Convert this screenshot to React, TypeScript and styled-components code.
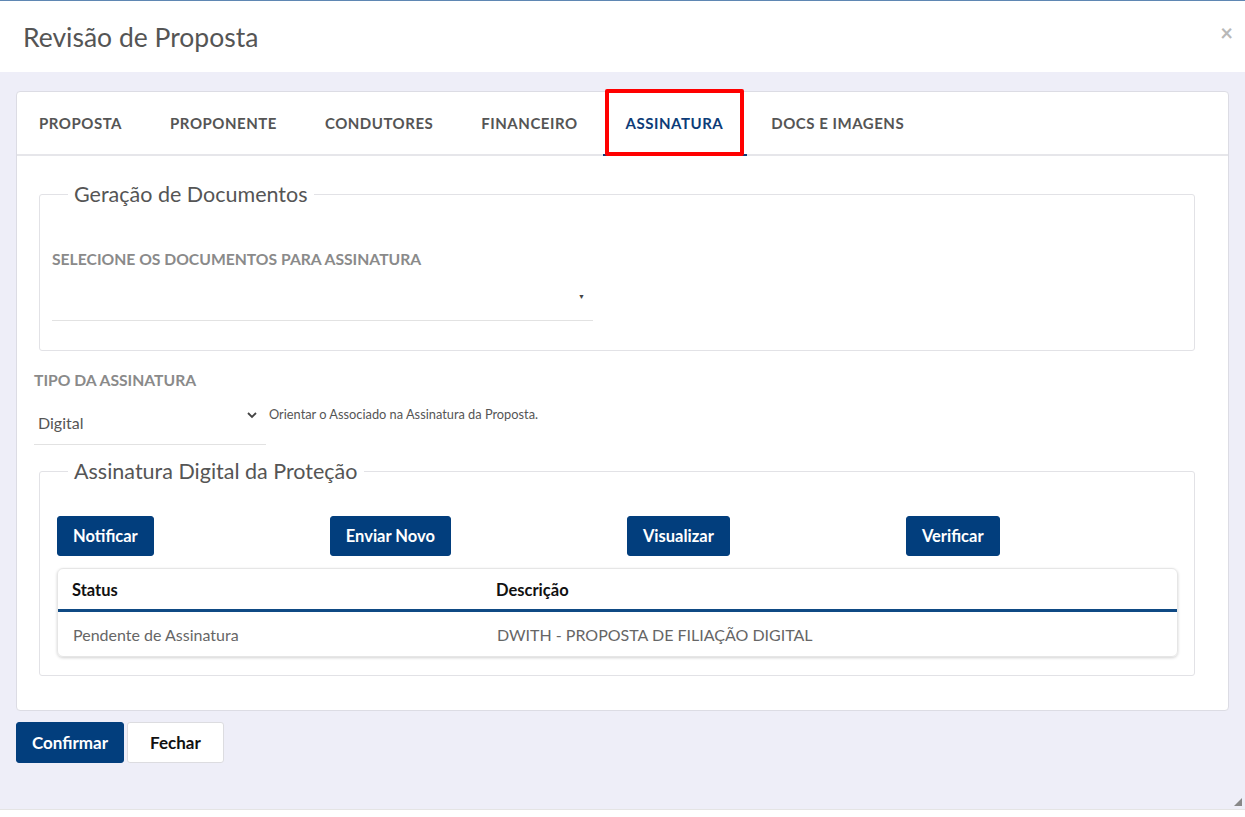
import styled, { createGlobalStyle } from 'styled-components';

const GlobalStyle = createGlobalStyle`
  html, body {
    margin: 0;
    padding: 0;
    background: #ffffff;
    font-family: Lato, "Liberation Sans", sans-serif;
  }
`;

const tabs = ['Proposta', 'Proponente', 'Condutores', 'Financeiro', 'Assinatura', 'Docs e Imagens'];
const actions = ['Notificar', 'Enviar Novo', 'Visualizar', 'Verificar'];

export default function App() {
  return (
    <>
      <GlobalStyle />
      <Modal>
        <Header>
          <Title>Revisão de Proposta</Title>
          <Close>×</Close>
        </Header>
        <Body>
          <Card>
            <TabBar>
              {tabs.map((t) => (
                <Tab key={t} $active={t === 'Assinatura'}>
                  {t}
                  {t === 'Assinatura' && <Highlight />}
                </Tab>
              ))}
            </TabBar>
            <CardContent>
              <Fieldset>
                <Legend>Geração de Documentos</Legend>
                <FieldBody $pad="43px 16px 29px 12px">
                  <FieldLabel>Selecione os documentos para assinatura</FieldLabel>
                  <DocSelect>
                    <SmallCaret>▼</SmallCaret>
                  </DocSelect>
                </FieldBody>
              </Fieldset>

              <TypeBlock>
                <FieldLabel>Tipo da assinatura</FieldLabel>
                <TypeRow>
                  <TypeSelect>
                    Digital
                    <Chevron viewBox="0 0 12 12">
                      <path d="M2 4l4 4 4-4" fill="none" stroke="#444" strokeWidth="1.8" />
                    </Chevron>
                  </TypeSelect>
                  <Hint>Orientar o Associado na Assinatura da Proposta.</Hint>
                </TypeRow>
              </TypeBlock>

              <Fieldset>
                <Legend>Assinatura Digital da Proteção</Legend>
                <FieldBody $pad="32px 16px 18px 17px">
                  <ActionRow>
                    {actions.map((a) => (
                      <PrimaryButton key={a}>{a}</PrimaryButton>
                    ))}
                  </ActionRow>
                  <TableCard>
                    <HeadRow>
                      <HeadCell>Status</HeadCell>
                      <HeadCell>Descrição</HeadCell>
                    </HeadRow>
                    <BodyRow>
                      <BodyCell>Pendente de Assinatura</BodyCell>
                      <BodyCell>DWITH - PROPOSTA DE FILIAÇÃO DIGITAL</BodyCell>
                    </BodyRow>
                  </TableCard>
                </FieldBody>
              </Fieldset>
            </CardContent>
          </Card>
          <Footer>
            <PrimaryButton $footer>Confirmar</PrimaryButton>
            <SecondaryButton>Fechar</SecondaryButton>
          </Footer>
          <Grip />
        </Body>
        <BottomStrip />
      </Modal>
    </>
  );
}

const Modal = styled.div`
  height: 100vh;
  display: flex;
  flex-direction: column;
  border-top: 1px solid #5f87b3;
  box-sizing: border-box;
`;

const Header = styled.div`
  height: 71px;
  display: flex;
  align-items: center;
  justify-content: space-between;
  padding: 0 12px 0 23px;
  background: #fff;
  flex-shrink: 0;
`;

const Title = styled.h2`
  margin: 0;
  font-size: 26.5px;
  font-weight: 400;
  color: #555;
`;

const Close = styled.span`
  font-size: 22px;
  color: #b8b8b8;
  font-weight: 700;
  align-self: flex-start;
  margin-top: 18px;
`;

const Body = styled.div`
  flex: 1;
  position: relative;
  background: #eeeef8;
  padding: 19px 16px 0 16px;
`;

const Card = styled.div`
  background: #fff;
  border: 1px solid #dcdce4;
  border-radius: 4px;
  padding-bottom: 34px;
`;

const TabBar = styled.div`
  display: flex;
  height: 62px;
  border-bottom: 2px solid #e6e6ea;
  padding-left: 22px;
`;

const Tab = styled.div<{ $active?: boolean }>`
  position: relative;
  display: flex;
  align-items: center;
  padding-right: 24px;
  margin-right: 24px;
  font-size: 15px;
  font-weight: 700;
  text-transform: uppercase;
  letter-spacing: 0.52px;
  color: ${(p) => (p.$active ? '#0d3c78' : '#555')};
  ${(p) =>
    p.$active &&
    `
    &::after {
      content: '';
      position: absolute;
      left: -23px;
      right: 0;
      bottom: -2px;
      height: 2px;
      background: #0d3c78;
    }
  `}
`;

const Highlight = styled.span`
  position: absolute;
  left: -21px;
  right: 3px;
  top: -3px;
  bottom: -2px;
  border: 4px solid #ff0000;
  border-radius: 2px;
  z-index: 1;
`;

const CardContent = styled.div`
  padding: 25px 33px 0 22px;
`;

const Fieldset = styled.fieldset`
  margin: 0;
  padding: 0;
  border: 1px solid #e2e2e6;
  border-radius: 3px;
  min-width: 0;
`;

const Legend = styled.legend`
  margin-left: 28px;
  padding: 0 6px;
  font-size: 21.5px;
  color: #555;
`;

const FieldBody = styled.div<{ $pad: string }>`
  padding: ${(p) => p.$pad};
`;

const FieldLabel = styled.div`
  font-size: 15.7px;
  font-weight: 700;
  color: #8a8a8a;
  text-transform: uppercase;
`;

const DocSelect = styled.div`
  position: relative;
  width: 541px;
  height: 50px;
  border-bottom: 1px solid #e2e2e2;
  margin-top: 2px;
`;

const SmallCaret = styled.span`
  position: absolute;
  right: 8px;
  top: 22px;
  font-size: 7px;
  color: #444;
`;

const TypeBlock = styled.div`
  margin: 20px 0 13px -5px;
`;

const TypeRow = styled.div`
  display: flex;
  align-items: flex-start;
  gap: 3px;
  margin-top: 18px;
`;

const TypeSelect = styled.div`
  position: relative;
  width: 228px;
  padding: 6px 0 12px 4px;
  border-bottom: 1px solid #e2e2e2;
  font-size: 16px;
  color: #555;
`;

const Chevron = styled.svg`
  position: absolute;
  right: 8px;
  top: 2px;
  width: 12px;
  height: 12px;
`;

const Hint = styled.span`
  font-size: 12.8px;
  color: #555;
  margin-top: -1px;
`;

const ActionRow = styled.div`
  display: flex;
  gap: 176px;
`;

const PrimaryButton = styled.button<{ $footer?: boolean }>`
  height: ${(p) => (p.$footer ? '41px' : '40px')};
  padding: 0 15px;
  background: #023e7d;
  color: #fff;
  border: 1px solid #023e7d;
  border-radius: 3px;
  font-family: inherit;
  font-size: ${(p) => (p.$footer ? '17px' : '16.5px')};
  font-weight: 700;
  cursor: pointer;
`;

const SecondaryButton = styled.button`
  height: 41px;
  padding: 0 22px;
  background: #fff;
  color: #111;
  border: 1px solid #dcdce0;
  border-radius: 3px;
  font-family: inherit;
  font-size: 17px;
  font-weight: 700;
`;

const TableCard = styled.div`
  margin-top: 12px;
  border: 1px solid #e6e6e6;
  border-radius: 6px;
  box-shadow: 0 1px 3px rgba(0, 0, 0, 0.18);
  overflow: hidden;
`;

const HeadRow = styled.div`
  display: grid;
  grid-template-columns: 424px 1fr;
  height: 40px;
  border-bottom: 3px solid #0f4a84;
`;

const BodyRow = styled.div`
  display: grid;
  grid-template-columns: 424px 1fr;
  height: 44px;
`;

const HeadCell = styled.div`
  display: flex;
  align-items: center;
  padding: 2px 14px 0;
  font-size: 16.5px;
  font-weight: 700;
  color: #111;
`;

const BodyCell = styled.div`
  display: flex;
  align-items: center;
  padding: 0 14px 0 15px;
  font-size: 16px;
  color: #666;
`;

const Footer = styled.div`
  display: flex;
  gap: 3px;
  margin-top: 11px;
`;

const Grip = styled.span`
  position: absolute;
  right: 3px;
  bottom: 3px;
  width: 0;
  height: 0;
  border-left: 8px solid transparent;
  border-bottom: 8px solid #888;
`;

const BottomStrip = styled.div`
  height: 7px;
  background: #fff;
  border-top: 1px solid #e4e4e4;
  flex-shrink: 0;
`;
